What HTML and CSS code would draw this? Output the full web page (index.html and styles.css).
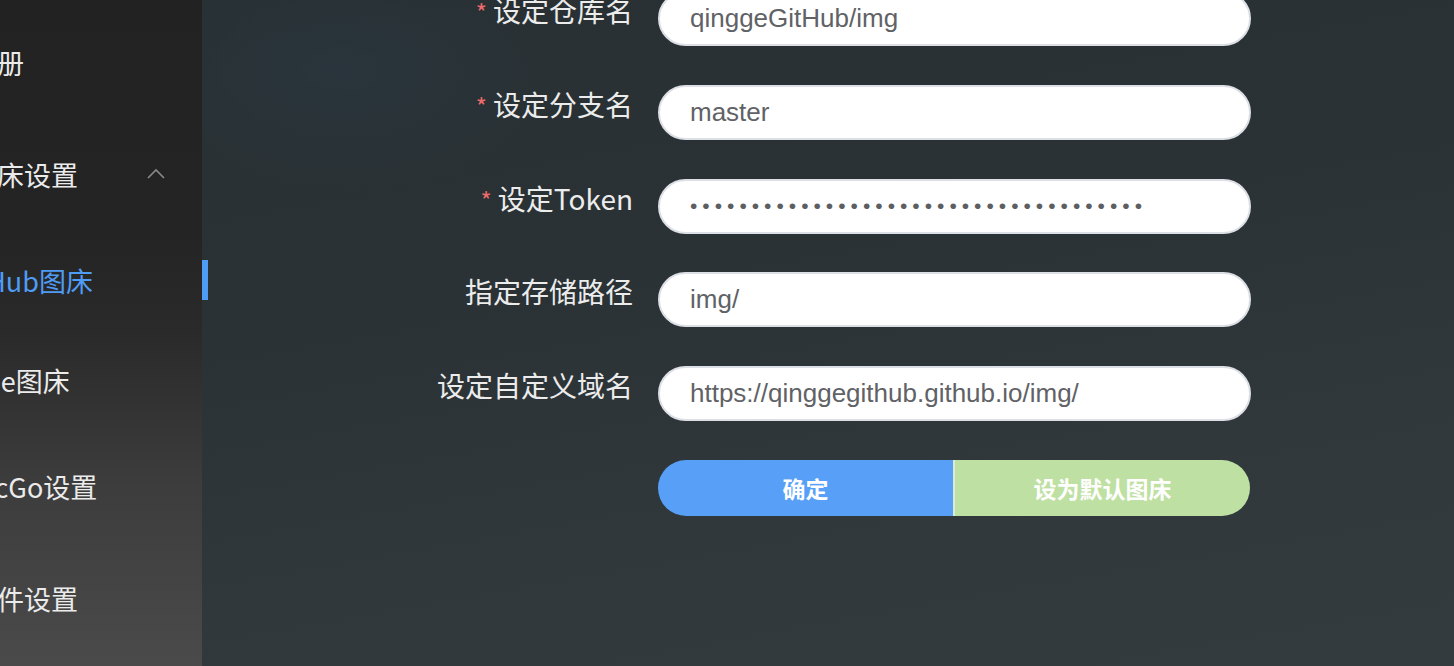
FILE: index.html
```html
<!DOCTYPE html>
<html lang="zh-CN">
<head>
<meta charset="utf-8">
<title>GitHub图床设置</title>
<link rel="stylesheet" href="styles.css">
</head>
<body>
<div class="app">
  <aside class="sidebar">
    <ul class="menu">
      <li class="item top">相册</li>
      <li class="item top submenu-title"><span>图床设置</span>
        <svg class="chev" width="20" height="12" viewBox="0 0 20 12"><polyline points="2,10 10,2 18,10" fill="none" stroke="#8a8a8a" stroke-width="1.6"/></svg>
      </li>
      <li class="item sub active">GitHub图床</li>
      <li class="item sub">Gitee图床</li>
      <li class="item top">PicGo设置</li>
      <li class="item top">插件设置</li>
    </ul>
  </aside>
  <main class="main">
    <span class="indicator"></span>
    <form class="form">
      <label class="label"><span class="req">*</span>设定仓库名</label>
      <input class="field" type="text" value="qinggeGitHub/img">

      <label class="label"><span class="req">*</span>设定分支名</label>
      <input class="field" type="text" value="master">

      <label class="label"><span class="req">*</span>设定Token</label>
      <input class="field pwd" type="password" value="ghp_abcdefghijklmnopqrstuvwxyz0123456">

      <label class="label">指定存储路径</label>
      <input class="field" type="text" value="img/">

      <label class="label">设定自定义域名</label>
      <input class="field" type="text" value="https://qinggegithub.github.io/img/">

      <span class="label"></span>
      <div class="btn-group">
        <button type="button" class="btn primary">确定</button>
        <button type="button" class="btn success">设为默认图床</button>
      </div>
    </form>
  </main>
</div>
</body>
</html>
```
FILE: styles.css
```css
* { box-sizing: border-box; }
html, body { margin: 0; padding: 0; height: 100%; }
body {
  font-family: "Noto Sans CJK SC", "Liberation Sans", sans-serif;
  background: #2c3437;
  overflow: hidden;
}
.app {
  display: flex;
  width: 1454px;
  height: 666px;
}
.sidebar {
  width: 202px;
  flex: none;
  overflow: hidden;
  background: linear-gradient(180deg, #222222 0%, #242424 35%, #2a2a2a 50%, #3c3c3c 72%, #4a4a4a 100%);
}
.menu {
  list-style: none;
  margin: 0;
  padding: 6px 0 0 0;
}
.item {
  display: flex;
  align-items: center;
  white-space: nowrap;
  font-size: 27px;
  color: #ebebeb;
}
.item.top { height: 112px; margin-left: -30px; }
.item.sub { height: 100px; margin-left: -50px; }
.item.active { color: #4f9cf5; }
.submenu-title { padding-right: 36px; }
.chev { margin-left: auto; }

.main {
  flex: 1;
  position: relative;
  background:
    radial-gradient(ellipse 220px 120px at 140px 70px, rgba(40, 55, 66, 0.55), rgba(40, 55, 66, 0) 100%),
    linear-gradient(170deg, #283033 0%, #2a3235 40%, #30383b 70%, #333b3e 100%);
}
.indicator {
  position: absolute;
  left: 0;
  top: 260px;
  width: 6px;
  height: 40px;
  background: #4f9cf5;
}
.form {
  display: grid;
  grid-template-columns: 231px 593px;
  row-gap: 38.75px;
  margin: -9px 0 0 225px;
}
.label {
  height: 55px;
  line-height: 38px;
  text-align: right;
  padding-right: 25px;
  font-size: 28px;
  color: #ececec;
  white-space: nowrap;
}
.req {
  color: #f06b6b;
  margin-right: 6px;
  font-size: 24px;
}
.field {
  height: 55px;
  width: 593px;
  border: 2px solid #dcdfe6;
  border-radius: 28px;
  background: #fff;
  padding: 0 30px;
  font-family: "Liberation Sans", sans-serif;
  font-size: 26px;
  color: #606266;
  outline: none;
}
.field.pwd {
  font-size: 21px;
  letter-spacing: 5.0px;
  padding-left: 30px;
  color: #5c5e62;
}
.btn-group {
  display: flex;
  height: 56px;
  width: 592px;
}
.btn {
  flex: 1;
  border: none;
  margin: 0;
  font-family: "Noto Sans CJK SC", sans-serif;
  font-size: 23px;
  font-weight: 700;
  color: #fff;
  cursor: pointer;
}
.btn.primary {
  background: #589ff7;
  border-radius: 28px 0 0 28px;
}
.btn.success {
  background: #bfe0a3;
  border-radius: 0 28px 28px 0;
  border-left: 2px solid #dcebd2;
}
```
